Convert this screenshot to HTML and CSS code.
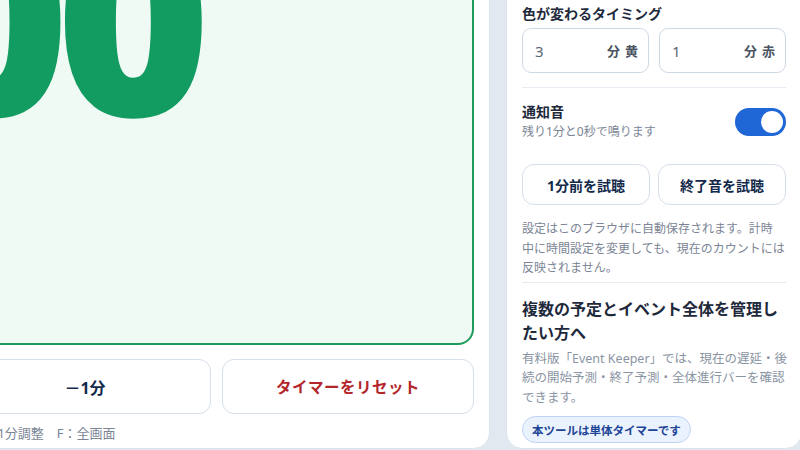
FILE: index.html
```html
<!DOCTYPE html>
<html lang="ja">
<head>
<meta charset="utf-8">
<link rel="stylesheet" href="styles.css">
</head>
<body>
<div class="page">
  <section class="card main">
    <div class="display">
      <div class="time">05:00</div>
    </div>
    <div class="btn-row">
      <button class="btn">－1分</button>
      <button class="btn reset">タイマーをリセット</button>
    </div>
    <p class="hint">←→：±1分調整　F：全画面</p>
  </section>
  <aside class="card side">
    <h3 class="label">色が変わるタイミング</h3>
    <div class="pair">
      <div class="field"><span class="num">3</span><span class="unit">分</span><span class="unit">黄</span></div>
      <div class="field"><span class="num">1</span><span class="unit">分</span><span class="unit">赤</span></div>
    </div>
    <hr class="rule">
    <div class="sound">
      <div class="sound-text">
        <div class="sound-title">通知音</div>
        <div class="sound-sub">残り1分と0秒で鳴ります</div>
      </div>
      <span class="toggle"><span class="knob"></span></span>
    </div>
    <div class="pair test">
      <button class="btn small">1分前を試聴</button>
      <button class="btn small">終了音を試聴</button>
    </div>
    <p class="note">設定はこのブラウザに自動保存されます。計時<br>中に時間設定を変更しても、現在のカウントには<br>反映されません。</p>
    <hr class="rule rule2">
    <h3 class="promo-title">複数の予定とイベント全体を管理し<br>たい方へ</h3>
    <p class="promo-text">有料版「Event Keeper」では、現在の遅延・後<br>続の開始予測・終了予測・全体進行バーを確認<br>できます。</p>
    <span class="badge">本ツールは単体タイマーです</span>
  </aside>
</div>
</body>
</html>
```

FILE: styles.css
```css
html, body {
  margin: 0;
  padding: 0;
  background: #e2e8f0;
  overflow: hidden;
  width: 800px;
  height: 450px;
}
body {
  font-family: "Noto Sans", "Noto Sans CJK JP", sans-serif;
  color: #1e293b;
}
.page {
  display: grid;
  grid-template-columns: 547px 296px;
  column-gap: 16px;
  margin-top: -151px;
  margin-left: -57px;
  height: 600px;
}
.card {
  background: #ffffff;
  border: 1px solid #dbe3ec;
  border-radius: 16px;
  box-sizing: border-box;
  display: flex;
  flex-direction: column;
  justify-content: flex-end;
}
.main {
  padding: 0 15px 6px 15px;
}
.side {
  padding: 0 15px 5px 15px;
}
.display {
  flex: 1;
  margin-top: 15px;
  border: 2px solid #1f9a5c;
  border-radius: 16px;
  background: #f0faf4;
  display: flex;
  justify-content: flex-end;
  align-items: flex-end;
  padding-right: 275px;
  padding-bottom: 197px;
  overflow: hidden;
}
.time {
  font-family: "Noto Sans", sans-serif;
  font-weight: 900;
  font-size: 265px;
  line-height: 1;
  color: #129c61;
  letter-spacing: -14px;
  white-space: nowrap;
}
.btn-row {
  display: grid;
  grid-template-columns: 1fr 1fr;
  column-gap: 11px;
  margin-top: 14px;
}
.btn {
  font-family: "Noto Sans", "Noto Sans CJK JP", sans-serif;
  background: #ffffff;
  border: 1px solid #d6dfea;
  border-radius: 12px;
  height: 55px;
  font-size: 16px;
  font-weight: 700;
  color: #13294b;
  padding: 0;
}
.reset {
  color: #b3262b;
  font-size: 15.5px;
  letter-spacing: 0.5px;
}
.hint {
  margin: 10px 0 0 0;
  text-indent: -8px;
  font-size: 13px;
  line-height: 18px;
  color: #7b8595;
  white-space: nowrap;
}
.label {
  margin: 0;
  font-size: 14px;
  line-height: 20px;
  font-weight: 700;
}
.pair {
  display: grid;
  grid-template-columns: 1fr 1fr;
  column-gap: 10px;
  margin-top: 4px;
}
.field {
  height: 45px;
  box-sizing: border-box;
  border: 1px solid #cfd9e6;
  border-radius: 9px;
  display: flex;
  align-items: center;
  gap: 5px;
  padding: 0 10px 0 12px;
}
.num {
  flex: 1;
  font-size: 15px;
  color: #5b6574;
}
.unit {
  font-size: 13px;
  font-weight: 700;
  color: #4b5563;
}
.rule {
  border: 0;
  border-top: 1px solid #e7ecf2;
  margin: 14px 0 0 0;
}
.sound {
  display: flex;
  align-items: center;
  justify-content: space-between;
  margin-top: 14px;
}
.sound-title {
  font-size: 14px;
  font-weight: 700;
  line-height: 20px;
}
.sound-sub {
  font-size: 12px;
  line-height: 19px;
  color: #7b8595;
}
.toggle {
  width: 51px;
  height: 28px;
  border-radius: 14px;
  background: #1f66d6;
  display: flex;
  justify-content: flex-end;
  align-items: center;
  padding: 0 3px;
  box-sizing: border-box;
}
.knob {
  width: 22px;
  height: 22px;
  border-radius: 50%;
  background: #ffffff;
}
.test {
  margin-top: 23px;
  column-gap: 8px;
}
.small {
  height: 41px;
  font-size: 14px;
  border-color: #d5deea;
}
.note {
  margin: 14px 0 0 0;
  font-size: 12px;
  line-height: 19.5px;
  color: #7b8595;
  white-space: nowrap;
}
.rule2 {
  margin-top: 4px;
}
.promo-title {
  margin: 14px 0 0 0;
  font-size: 16px;
  line-height: 24px;
  font-weight: 700;
  color: #1e293b;
  white-space: nowrap;
}
.promo-text {
  margin: 4px 0 0 0;
  font-size: 12.5px;
  line-height: 19.5px;
  color: #8a94a3;
  white-space: nowrap;
}
.badge {
  align-self: flex-start;
  margin-top: 9px;
  height: 27px;
  box-sizing: border-box;
  padding: 0 9px;
  border-radius: 14px;
  background: #eaf2fe;
  border: 1px solid #bcd3f5;
  color: #1d4596;
  font-size: 11.5px;
  font-weight: 700;
  display: flex;
  align-items: center;
}
```
